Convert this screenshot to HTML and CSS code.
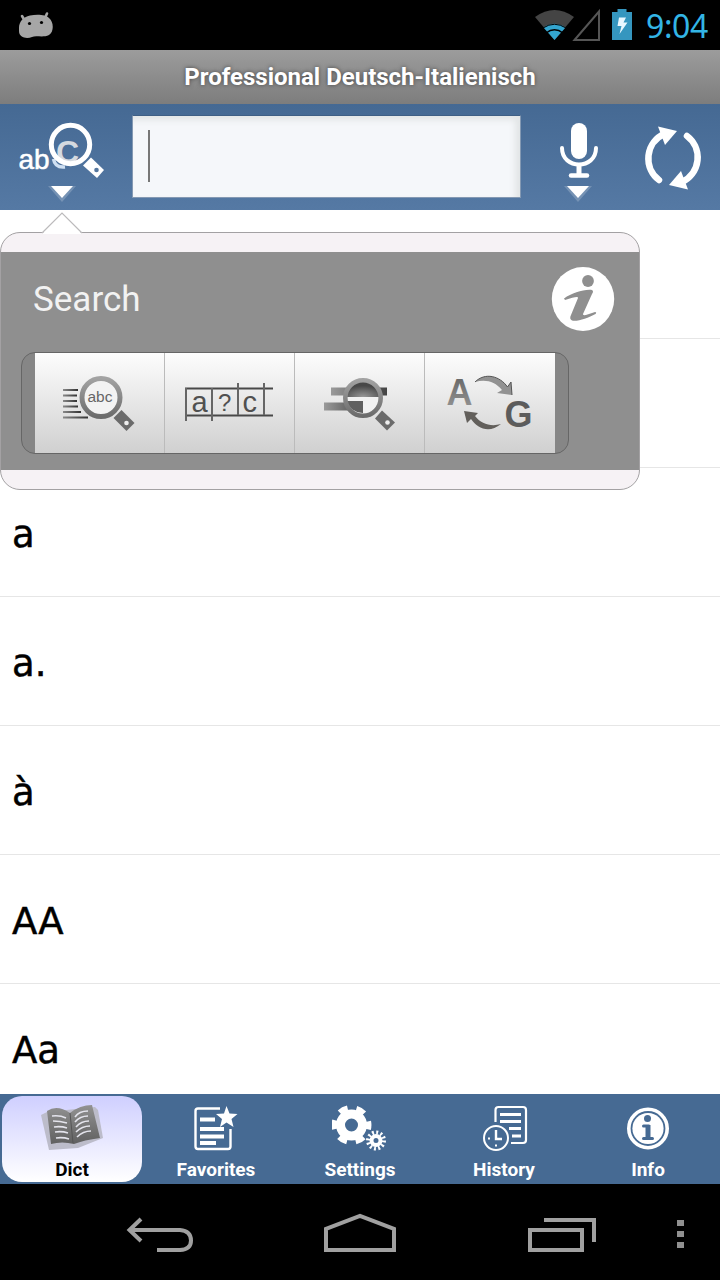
FILE: index.html
```html
<!DOCTYPE html>
<html lang="de">
<head>
  <meta charset="utf-8">
  <title>Professional Deutsch-Italienisch</title>
  <link rel="stylesheet" href="styles.css">
</head>
<body>
  <div class="status-bar">
    <svg class="droid" width="36" height="30" viewBox="18 10 36 30">
      <path d="M22 16L25 21M47 13.500L45 18" stroke="#a6a6a6" stroke-width="2.600" stroke-linecap="round"/>
      <path d="M19 28C19 22 23 17 30 15.500C37 14 46 14.500 49 18C54 22 54 32 49 35C43 38 36 35 32 37C27 39 19 38 19 31Z" fill="#a6a6a6"/>
      <circle cx="29.500" cy="23.500" r="1.600"/>
      <circle cx="41.500" cy="22.500" r="1.600"/>
    </svg>
    <div class="status-icons">
      <svg width="66" height="34" viewBox="534 8 66 34">
        <path d="M554.500 40L535 17Q554.500 3 574 17Z" fill="#444"/>
        <path d="M554.500 40L543.500 27.500Q554.500 20 565.500 27.500Z" fill="#33a5cf"/>
        <path d="M543 28Q554.500 20.500 566 28" fill="none" stroke="#000" stroke-width="1"/>
        <path d="M546 33Q554.500 26.500 563 33" fill="none" stroke="#000" stroke-width="1.500"/>
        <path d="M574.500 40L599 11.500V40Z" fill="none" stroke="#555" stroke-width="2"/>
      </svg>
      <svg class="battery" width="20" height="32" viewBox="612 9 20 32">
        <path d="M617.500 9H626.500V12H632V40H612V12H617.500Z" fill="#3596bf"/>
        <path d="M619 17.500H626L623.500 22.500H627.500L619.500 34L621.500 26H617.500Z" fill="#e8f7ff"/>
      </svg>
      <span class="clock">9:04</span>
    </div>
  </div>

  <div class="title-bar">Professional Deutsch-Italienisch</div>

  <div class="toolbar">
    <svg class="search-mode" width="90" height="86" viewBox="16 118 90 86">
      <text x="18.500" y="169" class="tool-abc">ab</text>
      <path d="M53.500 159Q55 168 65 167" fill="none" stroke="#cfe0f2" stroke-width="3.500"/>
      <text x="56" y="163" class="tool-c">C</text>
      <circle cx="70.500" cy="144.500" r="19.200" fill="none" stroke="#fff" stroke-width="5"/>
      <path d="M91 157.500L104 170L97 178L83 165.500Z" fill="#fff"/>
      <circle cx="96.500" cy="170" r="2.300" fill="#55779f"/>
      <path d="M48 186H76L62 202Z" fill="#fff" opacity=".2"/>
      <path d="M51 186H73L62 198Z" fill="#fff"/>
    </svg>
    <div class="search-field"><div class="caret"></div></div>
    <svg class="mic" width="44" height="86" viewBox="557 118 44 86">
      <rect x="571" y="123" width="16" height="36" rx="8" fill="#fff"/>
      <path d="M562 148C562 170 596 170 596 148" fill="none" stroke="#fff" stroke-width="4" stroke-linecap="round"/>
      <path d="M579 164V174" stroke="#fff" stroke-width="5"/>
      <path d="M571 175.500H587" stroke="#fff" stroke-width="4.500" stroke-linecap="round"/>
      <path d="M564 186H592L578 202Z" fill="#fff" opacity=".2"/>
      <path d="M567 186H589L578 198Z" fill="#fff"/>
    </svg>
    <svg class="swap" width="62" height="70" viewBox="642 123 62 70">
      <path d="M659 180A27 27 0 0 1 664 134M687 136A27 27 0 0 1 682 182" fill="none" stroke="#fff" stroke-width="6.500" stroke-linecap="round"/>
      <path d="M658 126.500L677 131L665 145Z" fill="#fff"/>
      <path d="M688 189.500L669 185L681 171Z" fill="#fff"/>
    </svg>
  </div>

  <div class="content">
    <ul class="word-list">
      <li></li>
      <li></li>
      <li>a</li>
      <li>a.</li>
      <li>à</li>
      <li>AA</li>
      <li>Aa</li>
    </ul>

    <div class="popup">
      <svg class="popup-arrow" width="42" height="24" viewBox="41 211 42 24">
        <path d="M42 234L62 213L82 234Z" fill="#fff"/>
        <path d="M42 233L62 213L82 233" fill="none" stroke="#bcbabc" stroke-width="1.200"/>
      </svg>
      <div class="popup-body">
        <div class="popup-head">
          <span>Search</span>
          <svg width="64" height="66" viewBox="551 266 64 66">
            <ellipse cx="583" cy="299" rx="31.200" ry="32" fill="#fff"/>
            <circle cx="588" cy="281" r="5.900" fill="#8f8f8f"/>
            <path d="M564 298.500C572 293 584 289 592 290Q594 291 592 294L583 314Q582 317 595 312Q597 312 595.500 314C588 318 577 322 572 320.500Q569 319 571 315L578 298Q579 295 565 300Z" fill="#8f8f8f"/>
          </svg>
        </div>
        <div class="modes">
          <button class="mode">
            <svg width="80" height="64" viewBox="60 371 80 64">
              <defs>
                <linearGradient id="ring" x1="0" y1="0" x2="0" y2="1">
                  <stop offset="0" stop-color="#a2a2a2"/>
                  <stop offset="1" stop-color="#6c6c6c"/>
                </linearGradient>
                <linearGradient id="line" x1="0" y1="0" x2="1" y2="0">
                  <stop offset="0" stop-color="#888"/>
                  <stop offset="1" stop-color="#333"/>
                </linearGradient>
              </defs>
              <g fill="url(#line)">
                <rect x="63" y="389" width="15" height="2"/>
                <rect x="63" y="394.500" width="14" height="2"/>
                <rect x="63" y="400" width="14" height="2"/>
                <rect x="63" y="405.500" width="15" height="2"/>
                <rect x="63" y="411" width="18" height="2"/>
                <rect x="63" y="416.500" width="25" height="2"/>
              </g>
              <circle cx="101" cy="397.500" r="19" fill="#f3f3f3" stroke="url(#ring)" stroke-width="5"/>
              <text x="87.500" y="402" class="abc-small">abc</text>
              <path d="M121.500 410L134.500 423L126.500 431L113.500 418Z" fill="#6b6b6b"/>
              <circle cx="126.500" cy="423" r="2.300" fill="#eee"/>
            </svg>
          </button>
          <button class="mode">
            <svg width="92" height="44" viewBox="184 382 92 44">
              <path d="M185 389.500H273M185 416.500H273" stroke="#484848" stroke-width="2"/>
              <path d="M186 389V422M212 389V422M238 384V416M264 384V416" stroke="#666" stroke-width="2"/>
              <text x="191.500" y="413" class="cell-letter">a</text>
              <text x="218" y="412" class="cell-mark">?</text>
              <text x="242.500" y="413" class="cell-letter">c</text>
            </svg>
          </button>
          <button class="mode">
            <svg width="76" height="60" viewBox="322 373 76 60">
              <defs>
                <linearGradient id="bar" x1="0" y1="0" x2="1" y2="0">
                  <stop offset="0" stop-color="#9a9a9a"/>
                  <stop offset="1" stop-color="#444"/>
                </linearGradient>
                <radialGradient id="lens" cx=".5" cy="1" r=".7">
                  <stop offset="0" stop-color="#999"/>
                  <stop offset="1" stop-color="#484848"/>
                </radialGradient>
              </defs>
              <rect x="331" y="387.500" width="56" height="8" fill="url(#bar)"/>
              <rect x="324" y="402.500" width="40" height="8" fill="url(#bar)"/>
              <circle cx="363" cy="398" r="16" fill="#f1f1f1"/>
              <path d="M347 397A16 16 0 0 1 379 397Z" fill="url(#lens)"/>
              <path d="M347 401H363V413A16 16 0 0 1 347 401Z" fill="#606060"/>
              <circle cx="363" cy="398" r="17.700" fill="none" stroke="url(#ring)" stroke-width="4.600"/>
              <path d="M382 410.500L395 422.500L387 430.500L375 418.500Z" fill="#6b6b6b"/>
              <circle cx="387.500" cy="422.500" r="2.300" fill="#eee"/>
            </svg>
          </button>
          <button class="mode">
            <svg width="90" height="62" viewBox="446 372 90 62">
              <defs>
                <linearGradient id="letter" x1="0" y1="0" x2="0" y2="1">
                  <stop offset="0" stop-color="#606060"/>
                  <stop offset="1" stop-color="#999"/>
                </linearGradient>
              </defs>
              <text x="447.500" y="404.500" class="big-letter" fill="url(#letter)">A</text>
              <text x="505.500" y="427" class="big-letter" fill="#5c5c5c">G</text>
              <path d="M476 382C486 372 501 376 508.500 387L512 382L513 395L498 393L503 390C496 381 486 379 476 382Z" fill="#929292"/>
              <path d="M476 382C486 372 501 376 508.500 387L512 382L513 395" fill="none" stroke="#555" stroke-width="1"/>
              <path d="M502 424C490 434 478 428 472 419L468 423L465 411L479 413L476 416C482 424 492 427 502 424Z" fill="#625f5b"/>
            </svg>
          </button>
        </div>
      </div>
    </div>
  </div>

  <div class="tabs">
    <a class="tab active">
      <svg width="64" height="50" viewBox="40 1102 64 50">
        <defs>
          <linearGradient id="page" x1="0" y1="0" x2="0" y2="1">
            <stop offset="0" stop-color="#929292"/>
            <stop offset="1" stop-color="#606060"/>
          </linearGradient>
        </defs>
        <path d="M41 1115L47 1112L95 1107L98 1110L103 1138L78 1148L49 1150Z" fill="#bcbcca"/>
        <path d="M47 1111Q57 1104 70 1113Q80 1105 92 1105L100 1138Q84 1140 74 1144Q62 1141 51 1144Z" fill="url(#page)"/>
        <path d="M70 1113L73 1143" stroke="#555" stroke-width="1"/>
        <path d="M52 1116Q60 1115 66 1118M53 1121Q60 1121 67 1123M54 1127Q61 1126 67 1128M55 1132Q62 1131 68 1133M56 1138Q63 1137 69 1139M75 1117Q79 1111 88 1111M75 1122Q80 1116 88 1116M76 1127Q81 1121 89 1121M76 1132Q82 1126 90 1126M77 1137Q83 1131 91 1131" fill="none" stroke="#e4e4ec" stroke-width="1.600"/>
      </svg>
      <span>Dict</span>
    </a>
    <a class="tab">
      <svg width="48" height="50" viewBox="192 1102 48 50">
        <path d="M220 1108.500H198Q195.500 1108.500 195.500 1111V1146.500Q195.500 1149 198 1149H228Q230.500 1149 230.500 1146.500V1129" fill="none" stroke="#fff" stroke-width="2.400"/>
        <path d="M200 1119.500H215M200 1129H224M200 1136.500H224M200 1143H216" stroke="#fff" stroke-width="3.800"/>
        <path d="M226.500 1106L229.500 1113.500L237.500 1114L231.500 1119L233.500 1127L226.500 1122.500L220 1127L222 1119L216 1114L224 1113.500Z" fill="#fff"/>
      </svg>
      <span>Favorites</span>
    </a>
    <a class="tab">
      <svg width="56" height="50" viewBox="332 1102 56 50">
        <circle cx="351.500" cy="1125" r="11" fill="none" stroke="#fff" stroke-width="9"/>
        <circle cx="351.500" cy="1125" r="17.200" fill="none" stroke="#fff" stroke-width="5.500" stroke-dasharray="9 9.012" stroke-dashoffset="4.500"/>
        <circle cx="376" cy="1140.500" r="4.500" fill="none" stroke="#fff" stroke-width="4"/>
        <circle cx="376" cy="1140.500" r="8" fill="none" stroke="#fff" stroke-width="4" stroke-dasharray="1.900 2.289"/>
      </svg>
      <span>Settings</span>
    </a>
    <a class="tab">
      <svg width="48" height="50" viewBox="480 1102 48 50">
        <path d="M495.500 1122V1110Q495.500 1107 498.500 1107H523Q526 1107 526 1110V1140Q526 1143 523 1143H511" fill="none" stroke="#fff" stroke-width="2.200"/>
        <path d="M500 1114.500H521M500 1121.500H521M509 1128.500H521M512 1136H521" stroke="#fff" stroke-width="3"/>
        <circle cx="496" cy="1138" r="12" fill="none" stroke="#fff" stroke-width="2"/>
        <path d="M496 1130V1139H502" fill="none" stroke="#fff" stroke-width="2.400"/>
        <path d="M488 1138.500H490M496 1144.500V1146.500" stroke="#fff" stroke-width="2"/>
      </svg>
      <span>History</span>
    </a>
    <a class="tab">
      <svg width="44" height="50" viewBox="626 1102 44 50">
        <circle cx="648" cy="1128.500" r="19.200" fill="none" stroke="#fff" stroke-width="3.600"/>
        <circle cx="648" cy="1128.500" r="15.600" fill="#fff"/>
        <circle cx="647.500" cy="1118.500" r="3.500" fill="#466a93"/>
        <path d="M643.500 1126H648V1138M643.500 1138.500H652.500" fill="none" stroke="#466a93" stroke-width="3" stroke-linecap="round"/>
        <path d="M648 1125V1139" stroke="#466a93" stroke-width="5"/>
      </svg>
      <span>Info</span>
    </a>
  </div>

  <div class="nav-bar">
    <svg class="nav-back" width="68" height="38" viewBox="126 1216 68 38">
      <path d="M141 1219L129.500 1230L141 1241M130 1230H180Q191 1231 191 1240.500Q191 1249.500 180 1250H157" fill="none" stroke="#a0a0a0" stroke-width="4"/>
    </svg>
    <svg class="nav-home" width="74" height="40" viewBox="323 1213 74 40">
      <path d="M326 1250V1229L360 1216L394 1229V1250Z" fill="none" stroke="#a0a0a0" stroke-width="4"/>
    </svg>
    <svg class="nav-recent" width="70" height="36" viewBox="527 1217 70 36">
      <path d="M530 1230H582V1250H530ZM544 1220H594V1242" fill="none" stroke="#a0a0a0" stroke-width="4"/>
    </svg>
    <svg class="nav-more" width="8" height="30" viewBox="677 1219 8 30">
      <path d="M677 1220H684V1226H677ZM677 1231H684V1237H677ZM677 1242H684V1248H677Z" fill="#909090"/>
    </svg>
  </div>
</body>
</html>
```
FILE: styles.css
```css
body {
  margin: 0;
  width: 720px;
  height: 1280px;
  overflow: hidden;
  display: flex;
  flex-direction: column;
  background: #fff;
  font-family: Roboto, "Noto Sans", sans-serif;
}

svg {
  display: block;
  flex: none;
}

/* Status bar */
.status-bar {
  height: 50px;
  flex: none;
  box-sizing: border-box;
  padding: 0 12px 0 18px;
  display: flex;
  align-items: center;
  justify-content: space-between;
  background: #000;
}

.status-icons {
  display: flex;
  align-items: center;
}

.battery {
  margin: 0 14px 0 12px;
}

.clock {
  color: #33b5e5;
  font-family: "Noto Sans", sans-serif;
  font-size: 32px;
  line-height: 52px;
  height: 50px;
  width: 62px;
  letter-spacing: -0.4px;
  white-space: nowrap;
}

.title-bar {
  height: 54px;
  flex: none;
  background: linear-gradient(#9c9c9c, #7d7d7d);
  color: #fff;
  font-size: 24px;
  font-weight: bold;
  line-height: 54px;
  text-align: center;
  text-shadow: 0 0 4px #444;
}

/* Toolbar */
.toolbar {
  height: 106px;
  flex: none;
  box-sizing: border-box;
  padding: 11px 16px 0;
  display: flex;
  background: linear-gradient(#456993, #5579a4);
}

.search-mode {
  margin-top: 3px;
}

.search-field {
  width: 389px;
  height: 83px;
  margin-left: 26px;
  box-sizing: border-box;
  border: 1px solid #8499b3;
  border-top-color: #3f5f85;
  background: #f5f7fa;
  box-shadow: inset -5px 4px 6px #e2e5e6;
  padding: 14px 15px;
}

.caret {
  width: 2px;
  height: 52px;
  background: #777;
}

.mic {
  margin: 3px 0 0 36px;
}

.swap {
  margin: 8px 0 0 41px;
}

.tool-abc {
  font: 28px "Liberation Sans", sans-serif;
  fill: #fff;
  stroke: #fff;
  stroke-width: 0.5px;
}

.tool-c {
  font: bold 32px "Liberation Sans", sans-serif;
  fill: #d5dae0;
}

/* Word list */
.content {
  height: 884px;
  flex: none;
  position: relative;
}

.word-list {
  height: 884px;
  overflow: hidden;
  margin: 0;
  padding: 0;
  list-style: none;
  font-family: "DejaVu Sans", sans-serif;
  font-size: 37px;
  color: #000;
  -webkit-text-stroke: 0.5px #000;
}

.word-list li {
  height: 129px;
  box-sizing: border-box;
  padding-left: 12px;
  border-bottom: 1px solid #e6e6e6;
  line-height: 134px;
}

/* Search popup hangs over the list */
.popup {
  position: absolute;
  top: 22px;
  left: 0;
  width: 640px;
  height: 258px;
  box-sizing: border-box;
  padding: 19px 0;
  border: 1px solid #a3a1a3;
  border-radius: 20px;
  background: #f6f2f5;
}

.popup-arrow {
  position: absolute;
  top: -22px;
  left: 40px;
}

.popup-body {
  height: 218px;
  box-sizing: border-box;
  padding: 14px 24px 0 20px;
  background: #8f8f8f;
}

.popup-head {
  display: flex;
  justify-content: space-between;
  align-items: center;
  height: 66px;
  padding-left: 12px;
  color: #f2f2f2;
  font-size: 35px;
}

.modes {
  display: flex;
  width: 548px;
  height: 102px;
  margin-top: 20px;
  box-sizing: border-box;
  padding: 0 13px;
  border: 1px solid #666;
  border-radius: 14px;
  background: #868686;
}

.mode {
  width: 130px;
  flex: none;
  box-sizing: border-box;
  display: flex;
  align-items: center;
  justify-content: center;
  padding: 0;
  border: 0;
  border-right: 1px solid #bbb;
  background: linear-gradient(#fdfdfd, #d0d0d0);
}

.mode:last-child {
  border-right: 0;
}

.abc-small {
  font: 15.500px "Liberation Sans", sans-serif;
  fill: #666;
}

.cell-letter {
  font: 29px "Liberation Sans", sans-serif;
  fill: #505050;
}

.cell-mark {
  font: 24px "Liberation Sans", sans-serif;
  fill: #505050;
}

.big-letter {
  font: bold 36px "Liberation Sans", sans-serif;
}

/* Tabs */
.tabs {
  height: 90px;
  flex: none;
  display: grid;
  grid-template-columns: repeat(5, 1fr);
  background: #466a93;
}

.tab {
  margin: 2px;
  padding-top: 6px;
  display: flex;
  flex-direction: column;
  align-items: center;
  border-radius: 20px;
  color: #fff;
  font-size: 19px;
  font-weight: bold;
  line-height: 36px;
}

.tab span {
  height: 28px;
}

.tab.active {
  background: linear-gradient(#cfcfff, #fff);
  color: #000;
}

/* Navigation bar */
.nav-bar {
  height: 96px;
  flex: none;
  display: flex;
  align-items: flex-start;
  box-sizing: border-box;
  padding: 29px 0 0 126px;
  background: #000;
}

.nav-back {
  margin-top: 3px;
}

.nav-home {
  margin-left: 129px;
}

.nav-recent {
  margin: 4px 0 0 130px;
}

.nav-more {
  margin: 6px 0 0 80px;
}
```
